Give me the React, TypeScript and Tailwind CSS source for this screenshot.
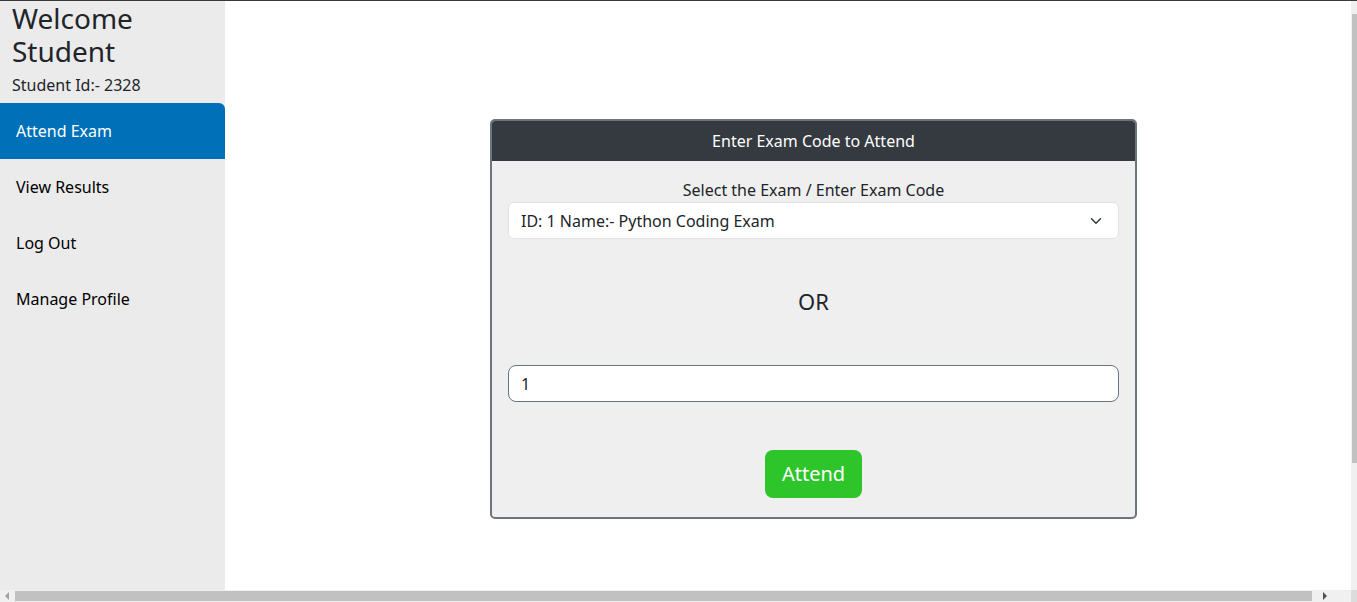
export default function App() {
  const menu = ['Attend Exam', 'View Results', 'Log Out', 'Manage Profile'];

  return (
    <div className="relative h-[602px] w-[1357px] overflow-hidden bg-white text-[#212529] font-['Noto_Sans',sans-serif]">
      <div className="h-px w-full bg-[#3a3a3a]" />
      <div className="flex h-[601px]">
        {/* sidebar */}
        <aside className="flex w-[225px] shrink-0 flex-col bg-[#ebebeb]">
          <div className="px-3 pt-[1px]">
            <h1 className="text-[28px] leading-[33px]">Welcome Student</h1>
            <p className="mt-[5px] text-[16px] leading-6">Student Id:- 2328</p>
          </div>
          <nav className="mt-[6px] flex flex-col">
            {menu.map((m, i) => (
              <a
                key={m}
                className={
                  'flex h-14 items-center px-4 text-[16px] ' +
                  (i === 0 ? 'rounded-tr-md bg-[#0070b8] text-white' : 'text-black')
                }
              >
                {m}
              </a>
            ))}
          </nav>
        </aside>

        {/* main */}
        <main className="flex flex-1 pl-[265px] pt-[118px]">
          <div className="h-[400px] w-[647px] overflow-hidden rounded-[5px] border-2 border-[#6c757d] bg-[#efefef]">
            <div className="flex h-[40px] items-center justify-center bg-[#343a40] text-[16px] text-white">
              Enter Exam Code to Attend
            </div>
            <div className="flex flex-col px-4 pt-[17px]">
              <label className="text-center text-[16px] leading-6">Select the Exam / Enter Exam Code</label>
              <div className="flex h-[37px] items-center justify-between rounded-md border border-[#e2e2e2] bg-white pl-3 pr-4 text-[16px]">
                <span>ID: 1 Name:- Python Coding Exam</span>
                <svg width="12" height="12" viewBox="0 0 16 16" fill="none" stroke="#343a40" strokeWidth="2" strokeLinecap="round" strokeLinejoin="round">
                  <path d="M2 5l6 6 6-6" />
                </svg>
              </div>
              <div className="mt-[48px] text-center text-[22px] leading-7">OR</div>
              <div className="mt-[50px] flex h-[37px] items-center rounded-lg border border-[#6c757d] bg-white px-3 text-[16px]">
                1
              </div>
              <div className="mt-[48px] flex justify-center">
                <button className="h-[48px] w-[97px] rounded-lg bg-[#2dc52a] text-[20px] text-white">Attend</button>
              </div>
            </div>
          </div>
        </main>
      </div>

      {/* fake browser scrollbars */}
      <div className="absolute right-0 top-px flex h-[589px] w-[6px] flex-col bg-[#f0f0f0]">
        <div className="mx-auto mt-[13px] h-[449px] w-[5px] bg-[#c1c1c1]" />
      </div>
      <div className="absolute bottom-0 left-0 flex h-[12px] w-[1351px] items-center bg-[#f0f0f0]">
        <span className="ml-[5px] h-0 w-0 border-y-[4px] border-r-[4px] border-y-transparent border-r-[#a3a3a3]" />
        <div className="ml-[6px] h-[10px] w-[1297px] bg-[#c1c1c1]" />
        <span className="ml-[11px] h-0 w-0 border-y-[4px] border-l-[4px] border-y-transparent border-l-[#505050]" />
      </div>
      <div className="absolute bottom-0 right-0 h-[12px] w-[6px] bg-[#dcdcdc]" />
    </div>
  );
}
